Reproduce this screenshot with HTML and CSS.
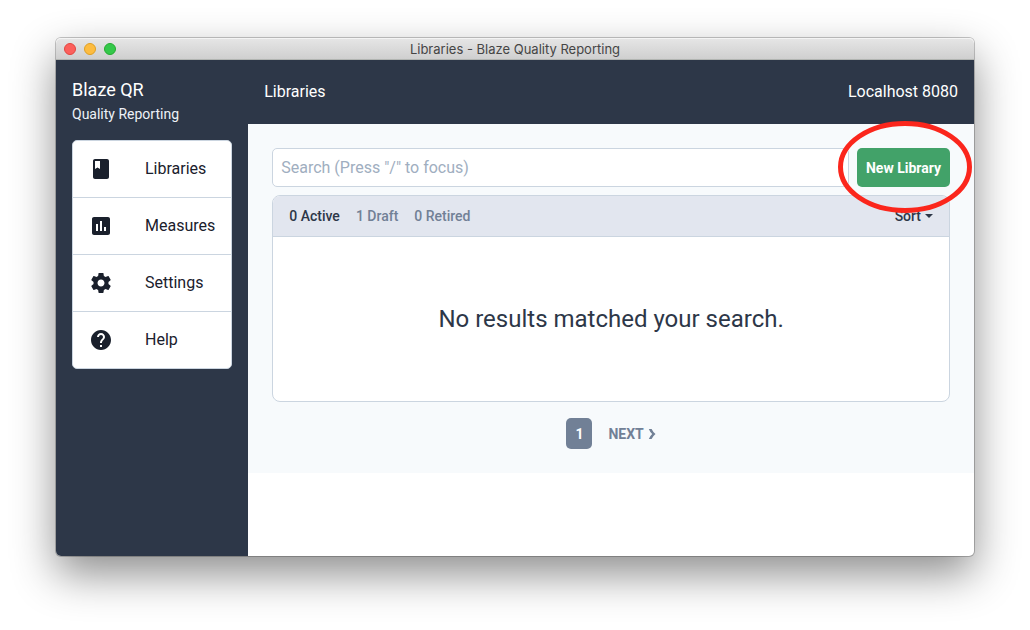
FILE: index.html
```html
<!DOCTYPE html>
<html lang="en">
<head>
<meta charset="utf-8">
<title>Libraries - Blaze Quality Reporting</title>
<link rel="stylesheet" href="styles.css">
</head>
<body>
<div class="window">
  <div class="titlebar">
    <div class="lights">
      <button class="light light-close" type="button" aria-label="Close"></button>
      <button class="light light-minimize" type="button" aria-label="Minimize"></button>
      <button class="light light-zoom" type="button" aria-label="Zoom"></button>
    </div>
    <span class="window-title">Libraries - Blaze Quality Reporting</span>
  </div>
  <div class="app">
    <aside class="sidebar">
      <div class="brand">
        <div class="brand-name">Blaze QR</div>
        <div class="brand-sub">Quality Reporting</div>
      </div>
      <nav class="nav">
        <a class="nav-item" href="#libraries">
          <svg class="nav-icon" viewBox="0 0 24 24"><path fill-rule="evenodd" d="M18 2H6c-1.100 0-2 .9-2 2v16c0 1.100.9 2 2 2h12c1.100 0 2-.9 2-2V4c0-1.100-.9-2-2-2zM6 4h5v8l-2.500-1.500L6 12V4z"/></svg>
          <span>Libraries</span>
        </a>
        <a class="nav-item" href="#measures">
          <svg class="nav-icon" viewBox="0 0 24 24"><path d="M19 3H5c-1.100 0-2 .9-2 2v14c0 1.100.9 2 2 2h14c1.100 0 2-.9 2-2V5c0-1.100-.9-2-2-2zM9 17H7v-7h2v7zm4 0h-2V7h2v10zm4 0h-2v-4h2v4z"/></svg>
          <span>Measures</span>
        </a>
        <a class="nav-item" href="#settings">
          <svg class="nav-icon" viewBox="0 0 24 24"><path d="M19.430 12.980c.04-.32.07-.64.07-.98s-.03-.66-.07-.98l2.110-1.650c.19-.15.24-.42.12-.64l-2-3.460c-.12-.22-.39-.3-.61-.22l-2.490 1c-.52-.4-1.080-.73-1.690-.98l-.38-2.650C14.460 2.180 14.250 2 14 2h-4c-.25 0-.46.18-.49.42l-.38 2.650c-.61.25-1.170.59-1.690.98l-2.490-1c-.23-.09-.49 0-.61.22l-2 3.460c-.13.22-.07.49.12.64l2.110 1.650c-.04.32-.07.65-.07.98s.03.66.07.98l-2.110 1.650c-.19.15-.24.42-.12.64l2 3.460c.12.22.39.3.61.22l2.490-1c.52.4 1.080.73 1.690.98l.38 2.650c.03.24.24.42.49.42h4c.25 0 .46-.18.49-.42l.38-2.650c.61-.25 1.170-.59 1.690-.98l2.490 1c.23.09.49 0 .61-.22l2-3.460c.12-.22.07-.49-.12-.64l-2.110-1.650zM12 15.500c-1.930 0-3.500-1.570-3.500-3.500s1.570-3.500 3.500-3.500 3.500 1.570 3.500 3.500-1.570 3.500-3.500 3.500z"/></svg>
          <span>Settings</span>
        </a>
        <a class="nav-item" href="#help">
          <svg class="nav-icon" viewBox="0 0 24 24"><path d="M12 2C6.480 2 2 6.480 2 12s4.480 10 10 10 10-4.480 10-10S17.520 2 12 2zm1 17h-2v-2h2v2zm2.070-7.750l-.9.920C13.450 12.900 13 13.500 13 15h-2v-.5c0-1.100.45-2.100 1.170-2.830l1.240-1.260c.37-.36.59-.86.59-1.410 0-1.100-.9-2-2-2s-2 .9-2 2H8c0-2.210 1.790-4 4-4s4 1.790 4 4c0 .88-.36 1.680-.93 2.250z"/></svg>
          <span>Help</span>
        </a>
      </nav>
    </aside>
    <div class="page">
      <header class="topbar">
        <span>Libraries</span>
        <span>Localhost 8080</span>
      </header>
      <main class="content">
        <div class="toolbar">
          <input class="search" type="text" aria-label="Search" placeholder='Search (Press "/" to focus)'>
          <div class="callout">
            <button class="new-button" type="button">New Library</button>
            <svg class="ring" viewBox="0 0 134 92" aria-hidden="true"><ellipse cx="67" cy="46" rx="64.500" ry="43.500"/></svg>
          </div>
        </div>
        <section class="results">
          <div class="results-head">
            <div class="filters">
              <button class="filter filter-current" type="button">0 Active</button>
              <button class="filter" type="button">1 Draft</button>
              <button class="filter" type="button">0 Retired</button>
            </div>
            <button class="sort" type="button">Sort<span class="caret"></span></button>
          </div>
          <p class="empty">No results matched your search.</p>
        </section>
        <nav class="pagination" aria-label="Pagination">
          <button class="page-number" type="button">1</button>
          <button class="page-next" type="button">NEXT <svg class="chevron" viewBox="0 0 8 12"><path d="M0.800 1H3.600Q5 4 7.500 6Q5 8 3.600 11H0.800Q2 8 4.200 6Q2 4 .8 1Z"/></svg></button>
        </nav>
      </main>
    </div>
  </div>
</div>
</body>
</html>
```
FILE: styles.css
```css
* {
  box-sizing: border-box;
}

body {
  margin: 0;
  min-height: 100vh;
  padding: 38px 56px 74px;
  display: flex;
  background: #fff;
  color: #2d3748;
  font-family: Roboto, "Liberation Sans", sans-serif;
  font-size: 16px;
  line-height: 24px;
}

button {
  margin: 0;
  padding: 0;
  border: 0;
  background: none;
  color: inherit;
  font: inherit;
}

.window {
  flex: 1;
  display: flex;
  flex-direction: column;
  min-width: 0;
  border-radius: 5px;
  background: #fff;
  box-shadow: 0 0 0 1px rgba(0, 0, 0, 0.22), 0 18px 44px rgba(0, 0, 0, 0.45);
}

.titlebar {
  display: grid;
  grid-template-columns: 1fr auto 1fr;
  align-items: center;
  height: 22px;
  padding: 0 8px;
  border-radius: 5px 5px 0 0;
  border-bottom: 1px solid #b1b4b1;
  background: linear-gradient(#e6e6e6, #cfcfcf);
  box-shadow: inset 0 1px #f4f4f4;
}

.lights {
  display: flex;
  gap: 8px;
}

.light {
  width: 12px;
  height: 12px;
  border-radius: 50%;
  border: 1px solid;
}

.light-close {
  background: #fc605c;
  border-color: #e2463f;
}

.light-minimize {
  background: #fdbc40;
  border-color: #dfa023;
}

.light-zoom {
  background: #34c84a;
  border-color: #24ab2f;
}

.window-title {
  color: #454545;
  font-family: Inter, Roboto, sans-serif;
  font-size: 13px;
  line-height: 20px;
}

.app {
  flex: 1;
  display: flex;
  min-height: 0;
}

.sidebar {
  flex: 0 0 192px;
  padding: 16px;
  border-radius: 0 0 0 5px;
  background: #2d3748;
}

.brand {
  margin-bottom: 16px;
  color: #fff;
}

.brand-name {
  font-size: 18px;
  line-height: 28px;
}

.brand-sub {
  color: #edf2f7;
  font-size: 14px;
  line-height: 20px;
}

.nav {
  border: 1px solid #cbd5e0;
  border-radius: 5px;
  overflow: hidden;
  background: #fff;
}

.nav-item {
  display: flex;
  align-items: center;
  gap: 32px;
  height: 56px;
  padding: 0 16px;
  color: #1a202c;
  text-decoration: none;
}

.nav-item + .nav-item {
  height: 57px;
  border-top: 1px solid #cbd5e0;
}

.nav-icon {
  flex: none;
  width: 24px;
  height: 24px;
  fill: #1a202c;
}

.page {
  flex: 1;
  min-width: 0;
}

.topbar {
  display: flex;
  align-items: center;
  justify-content: space-between;
  height: 64px;
  padding: 0 16px;
  background: #2d3748;
  color: #fff;
}

.content {
  padding: 24px;
  background: #f7fafc;
}

.toolbar {
  display: flex;
  gap: 8px;
  margin-bottom: 8px;
}

.search {
  flex: 1;
  min-width: 0;
  height: 39px;
  padding: 0 8px;
  border: 1px solid #cbd5e0;
  border-radius: 5px;
  background: #fff;
  color: #2d3748;
  font: inherit;
}

.search::placeholder {
  color: #a0aec0;
  opacity: 1;
}

.callout {
  position: relative;
}

.new-button {
  height: 39px;
  padding: 0 9px;
  border-radius: 5px;
  background: #42a269;
  color: #fff;
  font-size: 14px;
  font-weight: 700;
}

.ring {
  position: absolute;
  top: -27px;
  left: -19px;
  width: 134px;
  height: 92px;
  overflow: visible;
  fill: none;
  stroke: #fb261c;
  stroke-width: 5px;
  pointer-events: none;
}

.results {
  border: 1px solid #cbd5e0;
  border-radius: 8px;
  overflow: hidden;
  background: #fff;
}

.results-head {
  display: flex;
  align-items: center;
  justify-content: space-between;
  height: 41px;
  padding: 0 16px;
  border-bottom: 1px solid #cbd5e0;
  background: #e2e6ef;
  font-size: 14px;
  font-weight: 500;
}

.filters {
  display: flex;
  gap: 16px;
}

.filter {
  color: #718096;
}

.filter-current {
  color: #2d3748;
}

.sort {
  display: flex;
  align-items: center;
  gap: 4px;
}

.caret {
  border: 4px solid transparent;
  border-top-color: #2d3748;
  border-bottom: 0;
}

.empty {
  margin: 0;
  padding: 64px 16px;
  font-size: 24px;
  line-height: 36px;
  text-align: center;
}

.pagination {
  display: flex;
  align-items: center;
  justify-content: center;
  gap: 16px;
  margin-top: 16px;
  color: #718096;
  font-size: 14px;
  font-weight: 500;
}

.page-number {
  width: 26px;
  height: 31px;
  border-radius: 5px;
  background: #718096;
  color: #fff;
  font-weight: 700;
}

.page-next {
  display: flex;
  align-items: center;
  gap: 4px;
  font-weight: 700;
}

.chevron {
  width: 8px;
  height: 12px;
  fill: #718096;
}
```
